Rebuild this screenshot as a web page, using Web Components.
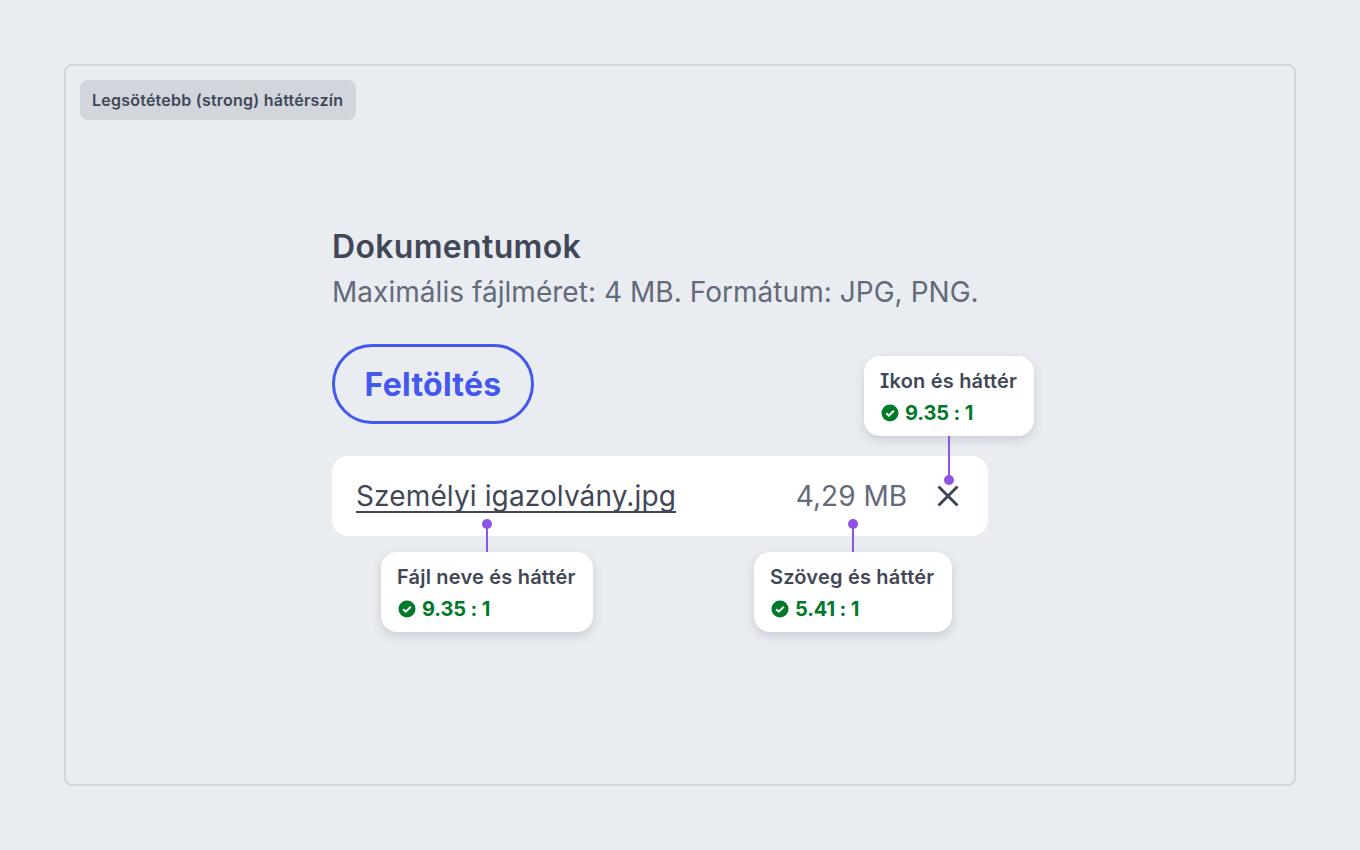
<!DOCTYPE html>
<html lang="hu">
<head>
<meta charset="utf-8">
<title>Dokumentumok</title>
<style>
  html, body { margin: 0; height: 100%; }
  body { background: #e9ecf1; font-family: Inter, "Noto Sans", sans-serif; color: #414756;
         font-optical-sizing: none; font-feature-settings: "cv08"; }
</style>
</head>
<body>
<demo-frame label="Legsötétebb (strong) háttérszín">
  <upload-field heading="Dokumentumok" hint="Maximális fájlméret: 4 MB. Formátum: JPG, PNG.">
    <upload-button>Feltöltés</upload-button>
    <file-row name="Személyi igazolvány.jpg" size="4,29 MB">
      <contrast-note slot="notes" side="top" style="left:532px;top:-100px;width:170px;--label-features:'cv08','ss02'" pin="85" label="Ikon és háttér" ratio="9.35 : 1"></contrast-note>
      <contrast-note slot="notes" style="left:49px;top:96px;width:212px" pin="106" label="Fájl neve és háttér" ratio="9.35 : 1"></contrast-note>
      <contrast-note slot="notes" style="left:422px;top:96px;width:198px" pin="99" label="Szöveg és háttér" ratio="5.41 : 1"></contrast-note>
    </file-row>
  </upload-field>
</demo-frame>

<script>
  class DemoFrame extends HTMLElement {
    constructor() {
      super();
      this.attachShadow({ mode: "open" });
    }
    connectedCallback() {
      this.shadowRoot.innerHTML = `
      <style>
        :host { display: block; box-sizing: border-box; width: 1232px; height: 722px; margin: 64px 0 0 64px;
                border: 2px solid #d3d6dc; border-radius: 8px; padding: 14px; }
        .tag { display: inline-block; height: 40px; line-height: 40px; padding: 0 13px 0 12px; border-radius: 8px;
               background: #d2d5dc; font-size: 16px; font-weight: 600; letter-spacing: .23px; color: #414756; vertical-align: top; }
        .body { padding: 107px 0 0 252px; }
      </style>
      <div class="tag">${this.getAttribute("label")}</div>
      <div class="body"><slot></slot></div>`;
    }
  }
  customElements.define("demo-frame", DemoFrame);

  class UploadField extends HTMLElement {
    constructor() {
      super();
      this.attachShadow({ mode: "open" });
    }
    connectedCallback() {
      this.shadowRoot.innerHTML = `
      <style>
        :host { display: flex; flex-direction: column; width: 656px; }
        h2 { margin: 0; font-size: 32px; line-height: 40px; font-weight: 600; letter-spacing: .33px; color: #414756; }
        p { margin: 5px 0 0; font-size: 28px; line-height: 40px; letter-spacing: .04px; color: #636a7a; white-space: nowrap; }
        .stack { display: flex; flex-direction: column; align-items: flex-start; gap: 32px; margin-top: 32px; }
      </style>
      <h2>${this.getAttribute("heading")}</h2>
      <p>${this.getAttribute("hint")}</p>
      <div class="stack"><slot></slot></div>`;
    }
  }
  customElements.define("upload-field", UploadField);

  class UploadButton extends HTMLElement {
    constructor() {
      super();
      this.attachShadow({ mode: "open" });
    }
    connectedCallback() {
      this.shadowRoot.innerHTML = `
      <style>
        :host { display: inline-flex; align-items: center; justify-content: center; box-sizing: border-box;
                width: 202px; height: 80px; border: 3px solid #4458ee; border-radius: 40px;
                font-size: 32px; font-weight: 700; letter-spacing: .25px; color: #4458ee; }
      </style>
      <slot></slot>`;
    }
  }
  customElements.define("upload-button", UploadButton);

  class FileRow extends HTMLElement {
    constructor() {
      super();
      this.attachShadow({ mode: "open" });
    }
    connectedCallback() {
      this.shadowRoot.innerHTML = `
      <style>
        :host { display: flex; align-items: center; position: relative; box-sizing: border-box; width: 656px; height: 80px;
                padding: 0 24px; background: #fff; border-radius: 16px; }
        .name { font-size: 28px; letter-spacing: .13px; color: #414756; text-decoration: underline; text-decoration-thickness: 2px;
                text-underline-offset: 5px; text-decoration-skip-ink: none; }
        .size { margin-left: auto; margin-right: 1px; font-size: 28px; color: #636a7a; }
        svg { display: block; margin-left: 24px; }
      </style>
      <span class="name">${this.getAttribute("name")}</span>
      <span class="size">${this.getAttribute("size")}</span>
      <svg width="32" height="32" viewBox="0 0 32 32" fill="none" stroke="#414756" stroke-width="3">
        <path d="M6.5 6.5l19 19M25.5 6.5l-19 19"/>
      </svg>
      <slot name="notes"></slot>`;
    }
  }
  customElements.define("file-row", FileRow);

  class ContrastNote extends HTMLElement {
    constructor() {
      super();
      this.attachShadow({ mode: "open" });
    }
    connectedCallback() {
      const top = this.getAttribute("side") === "top";
      const pin = this.getAttribute("pin");
      this.shadowRoot.innerHTML = `
      <style>
        :host { position: absolute; display: block; box-sizing: border-box; height: 80px; padding: 13px 16px;
                background: #fff; border-radius: 16px; white-space: nowrap;
                box-shadow: 0 4px 10px rgba(65, 71, 86, .18); }
        .label { font-size: 20px; line-height: 24px; font-weight: 600; letter-spacing: .2px; color: #414756;
                 font-feature-settings: var(--label-features, "cv08"); }
        .ratio { display: flex; align-items: center; gap: 6px; margin-top: 8px; padding-left: 1px;
                 font-size: 20px; line-height: 24px; font-weight: 700; letter-spacing: -.12px; color: #007a28; }
        .line { position: absolute; left: ${pin}px; width: 2px; margin-left: -1px; background: #8f53e8; height: 28px; }
        .line::after { content: ""; position: absolute; left: -4px; width: 10px; height: 10px; border-radius: 50%; background: #8f53e8; }
        .up { bottom: 100%; }
        .up::after { top: -5px; }
        .down { top: 100%; height: 44px; }
        .down::after { bottom: -5px; }
      </style>
      <div class="label">${this.getAttribute("label")}</div>
      <div class="ratio">
        <svg width="18" height="18" viewBox="0 0 18 18"><circle cx="9" cy="9" r="8.5" fill="#007a28"/><path d="M5.2 9.2l2.6 2.5 5-5" fill="none" stroke="#fff" stroke-width="2"/></svg>
        ${this.getAttribute("ratio")}
      </div>
      <div class="line ${top ? "down" : "up"}"></div>`;
    }
  }
  customElements.define("contrast-note", ContrastNote);
</script>
</body>
</html>
